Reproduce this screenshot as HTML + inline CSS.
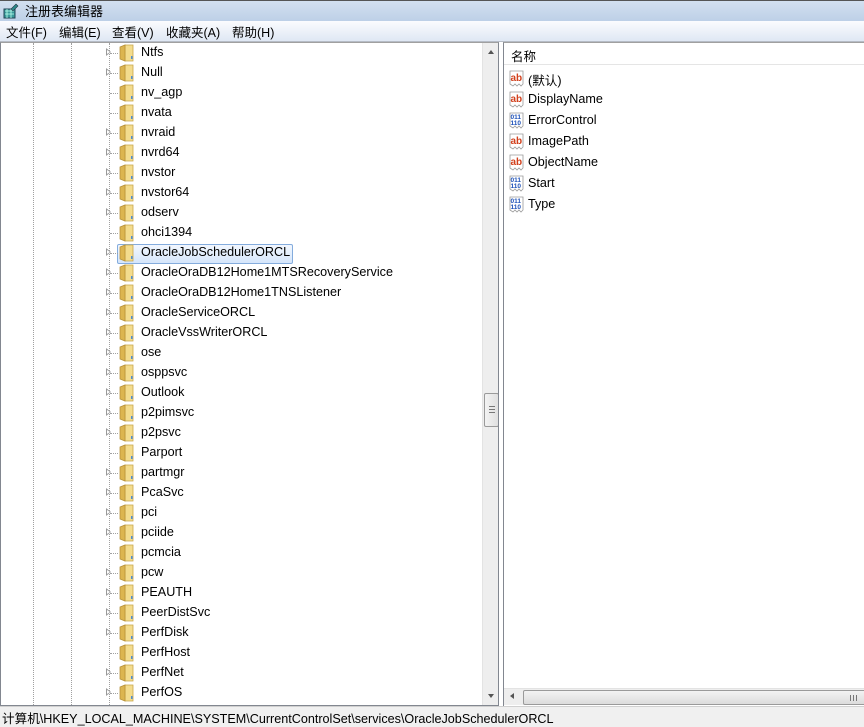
<!DOCTYPE html>
<html><head><meta charset="utf-8">
<style>
*{margin:0;padding:0;box-sizing:border-box}
body{width:864px;height:727px;overflow:hidden;position:relative;background:#fff;font-family:"Liberation Sans","Noto Sans CJK SC",sans-serif;font-size:12.6px;color:#000}
.title{position:absolute;left:0;top:0;width:864px;height:21px;background:linear-gradient(#d3e0f0,#bdd0e7);border-top:1px solid #555}
.title span{position:absolute;left:25px;top:0px;font-size:13px}
.menu{position:absolute;left:0;top:21px;width:864px;height:21px;background:linear-gradient(#fbfcfe,#dfe8f4);border-bottom:1px solid #b6bcc6}
.menu span{position:absolute;top:1px;font-size:12.5px}
.tree{position:absolute;left:0;top:42px;width:499px;height:664px;border:1px solid #828790;border-top:1px solid #a0a0a0;overflow:hidden;background:#fff}
.vl{position:absolute;top:0;height:664px;border-left:1px dotted #a0a0a0}
.rows{position:absolute;left:0;top:0}
.r{position:absolute;left:0;height:20px;width:480px}
.r .h{position:absolute;left:109px;top:10px;width:8px;border-top:1px dotted #a0a0a0}
.r .a{position:absolute;left:105px;top:5px;width:0;height:0;border-left:5px solid #999;border-top:4.5px solid transparent;border-bottom:4.5px solid transparent}
.r .a:after{content:"";position:absolute;left:-4px;top:-2.5px;border-left:3px solid #fff;border-top:2.5px solid transparent;border-bottom:2.5px solid transparent}
.r svg{position:absolute;left:118px;top:1px}
.r b{position:absolute;left:140px;top:2px;font-weight:normal;white-space:nowrap;font-size:12.6px}
.sel{position:absolute;left:116px;top:201px;width:176px;height:20px;border:1px solid #84acdd;border-radius:2px;background:linear-gradient(#f2f7fe,#d5e6fb)}
.vs{position:absolute;left:481px;top:0;width:17px;height:662px;background:#eeeeee;border-left:1px solid #e3e3e3}
.thumb{position:absolute;left:1px;top:350px;width:15px;height:34px;border:1px solid #9a9a9a;border-radius:2px;background:linear-gradient(90deg,#f3f3f3,#e0e0e0)}
.right{position:absolute;left:503px;top:42px;width:361px;height:664px;border-left:1px solid #828790;border-top:1px solid #a0a0a0;background:#fff}
.hdr{position:absolute;left:0;top:0;width:361px;height:22px;border-bottom:1px solid #e5e5e5;background:#fff}
.hdr span{position:absolute;left:7px;top:3px;font-size:12.5px}
.it{position:absolute;left:5px;height:20px}
.it svg{position:absolute;left:0;top:1px}
.it b{position:absolute;left:19px;top:2px;font-weight:normal;white-space:nowrap}
.hs{position:absolute;left:0;top:645px;width:361px;height:17px;background:#eeeeee;border-top:1px solid #e3e3e3}
.hthumb{position:absolute;left:19px;top:1px;width:345px;height:15px;border:1px solid #9a9a9a;border-radius:2px;background:linear-gradient(#f3f3f3,#dcdcdc)}
.status{position:absolute;left:0;top:706px;width:864px;height:21px;background:#f0f0f0;border-top:1px solid #d0d0d0}
.status span{position:absolute;left:2px;top:1px;font-size:12.6px}
</style></head><body>
<svg width="0" height="0" style="position:absolute">
<defs>
<symbol id="f" viewBox="0 0 15 18">
<path d="M6 1 L14 1 L14 17 L6 17 Z" fill="#f3dc8e" stroke="#c8a54a" stroke-width="0.8"/>
<path d="M1 3 L6 1 L6 17 L1 15 Z" fill="#dcb550" stroke="#b8923a" stroke-width="0.8"/>
<rect x="12" y="12" width="1.5" height="3" fill="#4a8fd8"/>
</symbol>
<symbol id="ab" viewBox="0 0 16 18">
<path d="M1 1 H14 V14 L12 16 L10 14 L8 16 L6 14 L4 16 L1 14 Z" fill="#fff" stroke="#9a9a9a" stroke-width="0.8"/>
<text x="1.5" y="11" font-family="Liberation Sans,sans-serif" font-size="10" font-weight="bold" fill="#d2401c">ab</text>
</symbol>
<symbol id="bn" viewBox="0 0 16 18">
<path d="M1 1 H14 V14 L12 16 L10 14 L8 16 L6 14 L4 16 L1 14 Z" fill="#fff" stroke="#9a9a9a" stroke-width="0.8"/>
<text x="1.5" y="7" font-family="Liberation Sans,sans-serif" font-size="6.5" font-weight="bold" fill="#1c50b8">011</text>
<text x="1.5" y="13" font-family="Liberation Sans,sans-serif" font-size="6.5" font-weight="bold" fill="#1c50b8">110</text>
</symbol>
</defs></svg>

<div class="title">
<svg style="position:absolute;left:3px;top:2px" width="16" height="16" viewBox="0 0 16 16"><rect x="1" y="6" width="11" height="9" fill="#3a9a9a" stroke="#245"/><path d="M2 8h9M2 11h9M4 6v9M8 6v9" stroke="#bfe" stroke-width="0.8"/><path d="M8 6 L13 1 L15 3 L10 8 Z" fill="#2c8a8a" stroke="#234" stroke-width="0.6"/></svg>
<span>注册表编辑器</span></div>
<div class="menu">
<span style="left:6px">文件(F)</span>
<span style="left:59px">编辑(E)</span>
<span style="left:112px">查看(V)</span>
<span style="left:166px">收藏夹(A)</span>
<span style="left:232px">帮助(H)</span>
</div>

<div class="tree">
<div class="vl" style="left:32px"></div>
<div class="vl" style="left:70px"></div>
<div class="vl" style="left:108px"></div>
<div class="sel"></div>
<div class="rows">
<div class="r" style="top:0"><i class="h"></i><i class="a"></i><svg width="15" height="18"><use href="#f"/></svg><b>Ntfs</b></div>
<div class="r" style="top:20px"><i class="h"></i><i class="a"></i><svg width="15" height="18"><use href="#f"/></svg><b>Null</b></div>
<div class="r" style="top:40px"><i class="h"></i><svg width="15" height="18"><use href="#f"/></svg><b>nv_agp</b></div>
<div class="r" style="top:60px"><i class="h"></i><svg width="15" height="18"><use href="#f"/></svg><b>nvata</b></div>
<div class="r" style="top:80px"><i class="h"></i><i class="a"></i><svg width="15" height="18"><use href="#f"/></svg><b>nvraid</b></div>
<div class="r" style="top:100px"><i class="h"></i><i class="a"></i><svg width="15" height="18"><use href="#f"/></svg><b>nvrd64</b></div>
<div class="r" style="top:120px"><i class="h"></i><i class="a"></i><svg width="15" height="18"><use href="#f"/></svg><b>nvstor</b></div>
<div class="r" style="top:140px"><i class="h"></i><i class="a"></i><svg width="15" height="18"><use href="#f"/></svg><b>nvstor64</b></div>
<div class="r" style="top:160px"><i class="h"></i><i class="a"></i><svg width="15" height="18"><use href="#f"/></svg><b>odserv</b></div>
<div class="r" style="top:180px"><i class="h"></i><svg width="15" height="18"><use href="#f"/></svg><b>ohci1394</b></div>
<div class="r" style="top:200px"><i class="h"></i><i class="a"></i><svg width="15" height="18"><use href="#f"/></svg><b>OracleJobSchedulerORCL</b></div>
<div class="r" style="top:220px"><i class="h"></i><i class="a"></i><svg width="15" height="18"><use href="#f"/></svg><b>OracleOraDB12Home1MTSRecoveryService</b></div>
<div class="r" style="top:240px"><i class="h"></i><i class="a"></i><svg width="15" height="18"><use href="#f"/></svg><b>OracleOraDB12Home1TNSListener</b></div>
<div class="r" style="top:260px"><i class="h"></i><i class="a"></i><svg width="15" height="18"><use href="#f"/></svg><b>OracleServiceORCL</b></div>
<div class="r" style="top:280px"><i class="h"></i><i class="a"></i><svg width="15" height="18"><use href="#f"/></svg><b>OracleVssWriterORCL</b></div>
<div class="r" style="top:300px"><i class="h"></i><i class="a"></i><svg width="15" height="18"><use href="#f"/></svg><b>ose</b></div>
<div class="r" style="top:320px"><i class="h"></i><i class="a"></i><svg width="15" height="18"><use href="#f"/></svg><b>osppsvc</b></div>
<div class="r" style="top:340px"><i class="h"></i><i class="a"></i><svg width="15" height="18"><use href="#f"/></svg><b>Outlook</b></div>
<div class="r" style="top:360px"><i class="h"></i><i class="a"></i><svg width="15" height="18"><use href="#f"/></svg><b>p2pimsvc</b></div>
<div class="r" style="top:380px"><i class="h"></i><i class="a"></i><svg width="15" height="18"><use href="#f"/></svg><b>p2psvc</b></div>
<div class="r" style="top:400px"><i class="h"></i><svg width="15" height="18"><use href="#f"/></svg><b>Parport</b></div>
<div class="r" style="top:420px"><i class="h"></i><i class="a"></i><svg width="15" height="18"><use href="#f"/></svg><b>partmgr</b></div>
<div class="r" style="top:440px"><i class="h"></i><i class="a"></i><svg width="15" height="18"><use href="#f"/></svg><b>PcaSvc</b></div>
<div class="r" style="top:460px"><i class="h"></i><i class="a"></i><svg width="15" height="18"><use href="#f"/></svg><b>pci</b></div>
<div class="r" style="top:480px"><i class="h"></i><i class="a"></i><svg width="15" height="18"><use href="#f"/></svg><b>pciide</b></div>
<div class="r" style="top:500px"><i class="h"></i><svg width="15" height="18"><use href="#f"/></svg><b>pcmcia</b></div>
<div class="r" style="top:520px"><i class="h"></i><i class="a"></i><svg width="15" height="18"><use href="#f"/></svg><b>pcw</b></div>
<div class="r" style="top:540px"><i class="h"></i><i class="a"></i><svg width="15" height="18"><use href="#f"/></svg><b>PEAUTH</b></div>
<div class="r" style="top:560px"><i class="h"></i><i class="a"></i><svg width="15" height="18"><use href="#f"/></svg><b>PeerDistSvc</b></div>
<div class="r" style="top:580px"><i class="h"></i><i class="a"></i><svg width="15" height="18"><use href="#f"/></svg><b>PerfDisk</b></div>
<div class="r" style="top:600px"><i class="h"></i><svg width="15" height="18"><use href="#f"/></svg><b>PerfHost</b></div>
<div class="r" style="top:620px"><i class="h"></i><i class="a"></i><svg width="15" height="18"><use href="#f"/></svg><b>PerfNet</b></div>
<div class="r" style="top:640px"><i class="h"></i><i class="a"></i><svg width="15" height="18"><use href="#f"/></svg><b>PerfOS</b></div>
</div>
<div class="vs">
<div style="position:absolute;left:5px;top:7px;border-bottom:4px solid #555;border-left:3.5px solid transparent;border-right:3.5px solid transparent"></div>
<div class="thumb"><div style="position:absolute;left:4px;top:12px;width:6px;height:7px;border-top:1px solid #777;border-bottom:1px solid #777"><div style="margin-top:2px;border-top:1px solid #777"></div></div></div>
<div style="position:absolute;left:5px;top:651px;border-top:4px solid #555;border-left:3.5px solid transparent;border-right:3.5px solid transparent"></div>
</div>
</div>

<div class="right">
<div class="hdr"><span>名称</span></div>
<div class="it" style="top:26px"><svg width="16" height="18"><use href="#ab"/></svg><b style="top:1px">(默认)</b></div>
<div class="it" style="top:47px"><svg width="16" height="18"><use href="#ab"/></svg><b>DisplayName</b></div>
<div class="it" style="top:68px"><svg width="16" height="18"><use href="#bn"/></svg><b>ErrorControl</b></div>
<div class="it" style="top:89px"><svg width="16" height="18"><use href="#ab"/></svg><b>ImagePath</b></div>
<div class="it" style="top:110px"><svg width="16" height="18"><use href="#ab"/></svg><b>ObjectName</b></div>
<div class="it" style="top:131px"><svg width="16" height="18"><use href="#bn"/></svg><b>Start</b></div>
<div class="it" style="top:152px"><svg width="16" height="18"><use href="#bn"/></svg><b>Type</b></div>
<div class="hs">
<div style="position:absolute;left:6px;top:4px;border-right:4px solid #555;border-top:3.5px solid transparent;border-bottom:3.5px solid transparent"></div>
<div class="hthumb"><div style="position:absolute;left:326px;top:4px;width:7px;height:6px;border-left:1px solid #777;border-right:1px solid #777"><div style="margin-left:2px;height:6px;border-left:1px solid #777"></div></div></div>
</div>
</div>

<div class="status"><span>计算机\HKEY_LOCAL_MACHINE\SYSTEM\CurrentControlSet\services\OracleJobSchedulerORCL</span></div>
</body></html>
